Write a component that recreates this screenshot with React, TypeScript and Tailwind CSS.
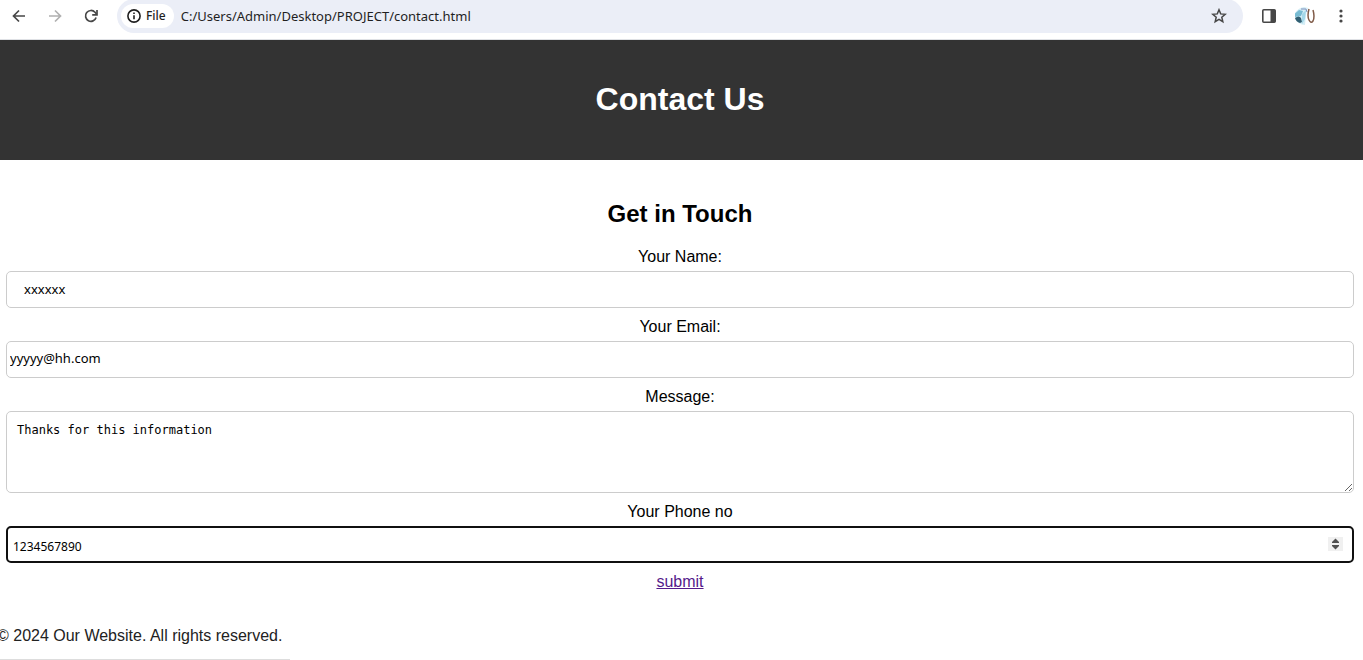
import React, { useRef } from "react";

const sansFont = "font-['Liberation_Sans',Arial,sans-serif]";
const uiFont = "font-['Noto_Sans','Open_Sans',sans-serif]";
const labelStyle = "mt-[10px] mb-[5px] block leading-[18px]";
const fieldStyle = "block h-[37px] w-full rounded-[5px] bg-white text-black outline-none";

function BrowserBar() {
  return (
    <div className={`flex h-10 items-start overflow-hidden border-b border-[#dfe1e5] bg-white text-[13px] text-[#1f1f1f] ${uiFont}`}>
      <nav className="flex h-8 items-center gap-5 pr-[18px] pl-[11px]" aria-label="Browser">
        <button type="button" aria-label="Back" className="text-[#474747]">
          <svg className="size-4" viewBox="0 0 16 16" fill="none" stroke="currentColor" strokeWidth="1.7">
            <path d="M14 8H3M8 2.5 2.5 8 8 13.5" />
          </svg>
        </button>
        <button type="button" aria-label="Forward" className="text-[#b0b0b0]">
          <svg className="size-4" viewBox="0 0 16 16" fill="none" stroke="currentColor" strokeWidth="1.7">
            <path d="M2 8h11M8 2.5 13.5 8 8 13.5" />
          </svg>
        </button>
        <button type="button" aria-label="Reload" className="text-[#474747]">
          <svg className="size-4" viewBox="0 0 16 16" fill="none" stroke="currentColor" strokeWidth="1.7">
            <path d="M13.1 9.5A5.4 5.4 0 1 1 12 4.3L13.5 6" />
            <path d="M14 2v4.8H9.2" />
          </svg>
        </button>
      </nav>
      <div className="-mt-px flex h-[34px] min-w-0 flex-1 items-center rounded-full bg-[#ebeef7] pr-4 pl-1">
        <button type="button" className="flex h-6 items-center gap-1 rounded-full bg-white pr-2 pl-[5px] text-[12px] font-medium">
          <svg className="size-4" viewBox="0 0 16 16" fill="none" stroke="currentColor" strokeWidth="1.6">
            <circle cx="8" cy="8" r="6.1" />
            <path d="M8 7.2v4M8 4.4v1.6" />
          </svg>
          File
        </button>
        <input
          type="text"
          aria-label="Address"
          defaultValue="C:/Users/Admin/Desktop/PROJECT/contact.html"
          className="ml-[7px] h-5 min-w-0 flex-1 bg-transparent text-[13px] outline-none"
        />
        <button type="button" aria-label="Bookmark this page" className="text-[#474747]">
          <svg className="size-4" viewBox="0 0 16 16" fill="none" stroke="currentColor" strokeWidth="1.5">
            <path d="m8 1.8 1.7 4.1 4.5.4-3.4 2.9 1 4.4L8 11.3l-3.8 2.3 1-4.4L1.8 6.3l4.5-.4Z" />
          </svg>
        </button>
      </div>
      <div className="flex h-8 items-center gap-4 pr-3.5 pl-[18px] text-[#474747]">
        <button type="button" aria-label="Side panel">
          <svg className="size-4" viewBox="0 0 16 16" fill="none">
            <rect x="1.8" y="1.8" width="12.4" height="12.4" rx="1" stroke="currentColor" strokeWidth="1.6" />
            <path d="M9.5 1.8h4.7v12.4H9.5Z" fill="currentColor" />
          </svg>
        </button>
        <button type="button" aria-label="Profile">
          <svg className="h-5 w-6" viewBox="0 0 24 20" fill="none">
            <path d="M2 7Q5 2 11 1l4 1-2 6-1 11Q5 19 2 12Z" fill="#d4edf5" />
            <path d="M2 7.5 6 4l4 1-2 5-6 1Z" fill="#78bbd2" />
            <path d="M2 12q4-3 6 0l1 4-2 1q-4-1-5-5Z" fill="#315f72" />
            <path d="m9 8 4-4-1 9-3 5Z" fill="#a4d8e9" />
            <path d="M8 3h5l1 3" stroke="#8091bd" strokeWidth="1" />
            <path d="M16 3q-2 7 0 11 2 4 4 1 2-4 0-11" stroke="#805b48" strokeWidth="1.5" />
          </svg>
        </button>
        <button type="button" aria-label="Menu">
          <svg className="size-4" viewBox="0 0 16 16" fill="currentColor">
            <circle cx="8" cy="3" r="1.6" />
            <circle cx="8" cy="8" r="1.6" />
            <circle cx="8" cy="13" r="1.6" />
          </svg>
        </button>
      </div>
    </div>
  );
}

function PhoneField() {
  const input = useRef<HTMLInputElement>(null);
  return (
    <div className="relative">
      <input
        ref={input}
        id="phone"
        type="number"
        defaultValue="1234567890"
        className={`${fieldStyle} ${uiFont} border-2 border-[#101010] pt-1 pr-8 pl-[5px] text-[12px] [&::-webkit-inner-spin-button]:appearance-none`}
      />
      <div className="absolute top-[11px] right-[11px] flex flex-col bg-[#f0f0f0] text-[#505050]">
        <button type="button" aria-label="Increase" onClick={() => input.current?.stepUp()}>
          <svg className="block h-[7px] w-[15px]" viewBox="0 0 15 7" fill="currentColor">
            <path d="M4 6v-1l3.500-3.500L11 5v1Z" />
          </svg>
        </button>
        <button type="button" aria-label="Decrease" onClick={() => input.current?.stepDown()}>
          <svg className="block h-[7px] w-[15px]" viewBox="0 0 15 7" fill="currentColor">
            <path d="M4 1v1l3.500 3.500L11 2V1Z" />
          </svg>
        </button>
      </div>
    </div>
  );
}

export default function App() {
  return (
    <div className={`bg-white text-base text-black ${sansFont}`}>
      <BrowserBar />
      <header className="bg-[#333333] pt-[39px] pr-[3px] pb-[41px] text-center text-white">
        <h1 className="text-[32px] leading-10 font-bold">Contact Us</h1>
      </header>
      <main className="pt-10 pr-[9px] pl-1.5 text-center">
        <h2 className="text-[24px] leading-7 font-bold">Get in Touch</h2>
        <form className="pt-2.5">
          <label htmlFor="name" className={labelStyle}>Your Name:</label>
          <input id="name" type="text" defaultValue="xxxxxx" className={`${fieldStyle} ${uiFont} border border-[#cccccc] px-[17px] pb-0.5 text-[13px]`} />
          <label htmlFor="email" className={labelStyle}>Your Email:</label>
          <input id="email" type="email" defaultValue="yyyyy@hh.com" className={`${fieldStyle} ${uiFont} border border-[#cccccc] px-[3px] pb-1 text-[13px]`} />
          <label htmlFor="message" className={labelStyle}>Message:</label>
          <textarea
            id="message"
            defaultValue="Thanks for this information"
            className="block h-[82px] w-full resize rounded-[5px] border border-[#cccccc] px-2.5 py-2.5 font-['DejaVu_Sans_Mono',monospace] text-[12px] leading-4 outline-none"
          />
          <label htmlFor="phone" className={labelStyle}>Your Phone no</label>
          <PhoneField />
          <a href="#submit" className="mx-auto mt-[10px] block w-fit leading-[18px] text-[#551a8b] underline">submit</a>
        </form>
      </main>
      <footer className="mt-5 flex">
        <p className="-ml-[3px] border-b border-[#dddddd] pt-4 pr-2 pb-3.5 leading-[18px] text-[#222222]">© 2024 Our Website. All rights reserved.</p>
      </footer>
    </div>
  );
}
